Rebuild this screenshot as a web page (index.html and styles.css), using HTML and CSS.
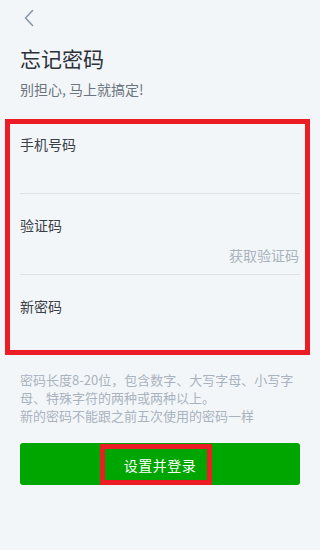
FILE: index.html
```html
<!DOCTYPE html>
<html lang="zh-CN">
<head>
  <meta charset="UTF-8" />
  <meta name="viewport" content="width=device-width, initial-scale=1.0" />
  <title>忘记密码</title>
  <link rel="stylesheet" href="styles.css">
</head>
<body>
  <div class="page">
    <div class="nav">
      <svg class="back" width="12" height="18" viewBox="0 0 12 18">
        <path d="M9.5 1.5 L2.5 9 L9.5 16.5" fill="none" stroke="#8a96a8" stroke-width="1.6" stroke-linecap="round" stroke-linejoin="round"/>
      </svg>
    </div>

    <h1 class="title">忘记密码</h1>
    <p class="subtitle">别担心, 马上就搞定!</p>

    <div class="form">
      <div class="field first">
        <label>手机号码</label>
        <div class="input"></div>
      </div>
      <div class="field">
        <label>验证码</label>
        <div class="input">
          <span class="code-link">获取验证码</span>
        </div>
      </div>
      <div class="field last">
        <label>新密码</label>
        <div class="input"></div>
      </div>
    </div>

    <p class="hint">密码长度8-20位，包含数字、大写字母、小写字母、特殊字符的两种或两种以上。<br>新的密码不能跟之前五次使用的密码一样</p>

    <button class="submit"><span class="submit-label">设置并登录</span></button>
  </div>
</body>
</html>
```

FILE: styles.css
```css
:root {
  --bg: #f3f6f8;
  --title: #2c3138;
  --text: #3a4048;
  --muted: #6b7580;
  --hint: #a9b3bf;
  --line: #dde2e7;
  --green: #00a600;
  --mark: #ec1c24;
}

* {
  margin: 0;
  padding: 0;
  box-sizing: border-box;
}

body {
  background: var(--bg);
  font-family: "Noto Sans CJK SC", "Noto Sans", sans-serif;
  color: var(--text);
  width: 320px;
  min-height: 550px;
}

.page {
  padding: 0 20px;
}

.nav {
  height: 36px;
  display: flex;
  align-items: center;
  padding-left: 3px;
}

.back {
  display: block;
}

.title {
  margin-top: 8px;
  font-size: 21px;
  line-height: 28px;
  font-weight: 400;
  color: var(--title);
}

.subtitle {
  margin-top: 7px;
  font-size: 14px;
  line-height: 20px;
  color: var(--muted);
}

/* highlighted form block */
.form {
  margin: 20px -10px 0 -15px;
  border: 5px solid var(--mark);
  padding: 0 5px 0 10px;
}

.field {
  padding-top: 21px;
  border-bottom: 1px solid var(--line);
}

.field.first {
  padding-top: 10px;
}

.field.last {
  border-bottom: none;
}

.field label {
  display: block;
  font-size: 14px;
  line-height: 20px;
  color: var(--text);
}

.input {
  height: 39px;
  display: flex;
  align-items: center;
  justify-content: flex-end;
}

.field.last .input {
  height: 34px;
}

.code-link {
  font-size: 14px;
  line-height: 20px;
  color: var(--hint);
  margin-right: 1px;
}

.hint {
  margin-top: 16px;
  font-size: 13px;
  line-height: 18px;
  color: var(--hint);
}

.submit {
  margin-top: 18px;
  width: 100%;
  height: 42px;
  border: none;
  border-radius: 3px;
  background: var(--green);
  display: flex;
  justify-content: center;
  align-items: flex-end;
  font-family: inherit;
}

.submit-label {
  width: 112px;
  height: 41px;
  margin-right: 8px;
  padding-left: 8px;
  border: 5px solid var(--mark);
  display: flex;
  align-items: center;
  justify-content: center;
  font-size: 14px;
  color: #fff;
  letter-spacing: 0.5px;
}
```
